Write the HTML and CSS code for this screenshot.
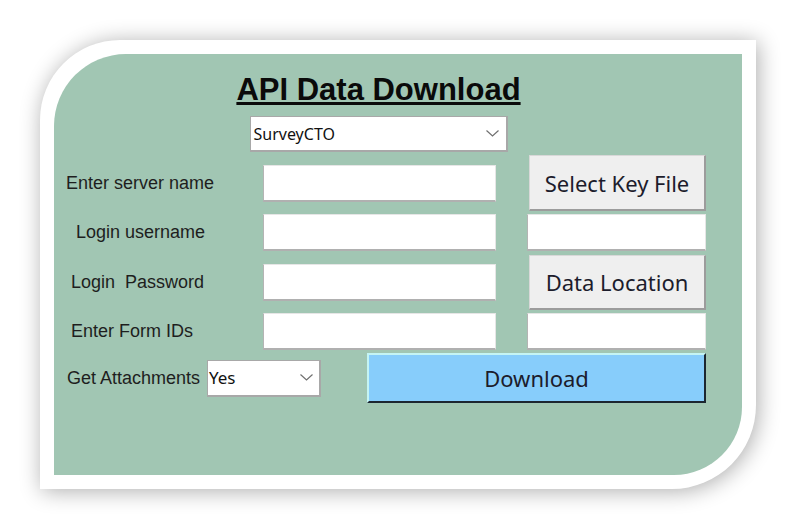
FILE: index.html
```html
<!DOCTYPE html>
<html>
<head>
<meta charset="utf-8">
<title>API Data Download</title>
<link rel="stylesheet" href="styles.css">
</head>
<body>
<div class="frame">
  <div class="panel">
    <div class="header">
      <h1 class="title">API Data Download</h1>
      <div class="combo combo-source">
        <span class="combo-text">SurveyCTO</span>
        <svg class="chev" width="13" height="7" viewBox="0 0 13 7"><path d="M0.5 0.5 L6.5 6 L12.5 0.5" fill="none" stroke="#707070" stroke-width="1.2"/></svg>
      </div>
    </div>
    <div class="form-grid">
      <div class="label l-server">Enter server name</div>
      <div class="field"></div>
      <div class="btn btn-gray">Select Key File</div>

      <div class="label l-user">Login username</div>
      <div class="field"></div>
      <div class="field"></div>

      <div class="label l-pass">Login  Password</div>
      <div class="field"></div>
      <div class="btn btn-gray btn-short">Data Location</div>

      <div class="label l-form">Enter Form IDs</div>
      <div class="field"></div>
      <div class="field"></div>
    </div>
    <div class="bottom-row">
      <div class="label l-attach">Get Attachments</div>
      <div class="combo combo-attach">
        <span class="combo-text">Yes</span>
        <svg class="chev" width="13" height="7" viewBox="0 0 13 7"><path d="M0.5 0.5 L6.5 6 L12.5 0.5" fill="none" stroke="#707070" stroke-width="1.2"/></svg>
      </div>
      <div class="btn btn-download">Download</div>
    </div>
  </div>
</div>
</body>
</html>
```

FILE: styles.css
```css
html, body {
  margin: 0;
  padding: 0;
  background: #ffffff;
}

body {
  width: 797px;
  height: 530px;
  overflow: hidden;
}

.frame {
  margin: 40px 0 0 40px;
  width: 716px;
  height: 449px;
  padding: 14px;
  box-sizing: border-box;
  background: #ffffff;
  border-radius: 80px 0 84px 0;
  box-shadow: 2px 2px 22px rgba(0, 0, 0, 0.33);
}

.panel {
  height: 100%;
  background: #a1c6b3;
  border-radius: 72px 0 68px 0;
  padding: 18px 36px 0 0;
  box-sizing: border-box;
  display: flex;
  flex-direction: column;
}

.header {
  width: 649px;
  display: flex;
  flex-direction: column;
  align-items: center;
}

.title {
  margin: 0;
  font-family: "Liberation Sans", Arial, sans-serif;
  font-weight: bold;
  font-size: 31px;
  line-height: 36px;
  color: #0a0a0a;
  text-decoration: underline;
  text-decoration-thickness: 3px;
  text-underline-offset: 2px;
}

.combo {
  background: #ffffff;
  box-sizing: border-box;
  border: 1px solid #a8a8a8;
  border-right-width: 2px;
  border-bottom-width: 2px;
  display: flex;
  align-items: center;
  justify-content: space-between;
  font-family: "Noto Sans", "Open Sans", sans-serif;
  color: #111;
}

.combo-source {
  margin-top: 8px;
  width: 258px;
  height: 36px;
  padding: 0 7px 0 3px;
  font-size: 16px;
}

.combo-attach {
  width: 114px;
  height: 37px;
  padding: 0 6px 0 1px;
  font-size: 17px;
}

.chev {
  display: block;
}

.form-grid {
  margin-top: 3px;
  display: grid;
  grid-template-columns: 178px 233px 179px;
  column-gap: 31px;
  grid-template-rows: 56px 42px 58px 41px;
  align-items: center;
}

.label {
  font-family: "Liberation Sans", Arial, sans-serif;
  font-size: 18px;
  color: #1e1e1e;
  white-space: pre;
}

.l-server { padding-left: 12px; }
.l-user { padding-left: 22px; }
.l-pass { padding-left: 17px; }
.l-form { padding-left: 17px; }
.l-attach {
  width: 153px;
  box-sizing: border-box;
  padding-left: 13px;
}

.field {
  height: 37px;
  background: #ffffff;
  box-sizing: border-box;
  border-top: 1px solid #e6e6e6;
  border-right: 1px solid #e6e6e6;
  border-left: 1px solid #b4b4b4;
  border-bottom: 2px solid #b0b0b0;
}

.btn {
  box-sizing: border-box;
  display: flex;
  align-items: center;
  justify-content: center;
  font-family: "Noto Sans", "Open Sans", sans-serif;
  font-size: 22px;
  color: #1c1c2c;
}

.btn-gray {
  margin-left: 2px;
  height: 56px;
  background: #efefef;
  border-top: 1px solid #d8d8d8;
  border-left: 1px solid #d8d8d8;
  border-right: 2px solid #9c9c9c;
  border-bottom: 2px solid #9c9c9c;
}

.btn-short {
  height: 55px;
}

.bottom-row {
  height: 52px;
  display: flex;
  align-items: center;
}

.btn-download {
  margin-left: auto;
  width: 339px;
  height: 50px;
  background: #87cdfb;
  border-top: 2px solid #c4f4f4;
  border-left: 2px solid #c4f4f4;
  border-right: 2px solid #1c2630;
  border-bottom: 2px solid #1c2630;
}
```
